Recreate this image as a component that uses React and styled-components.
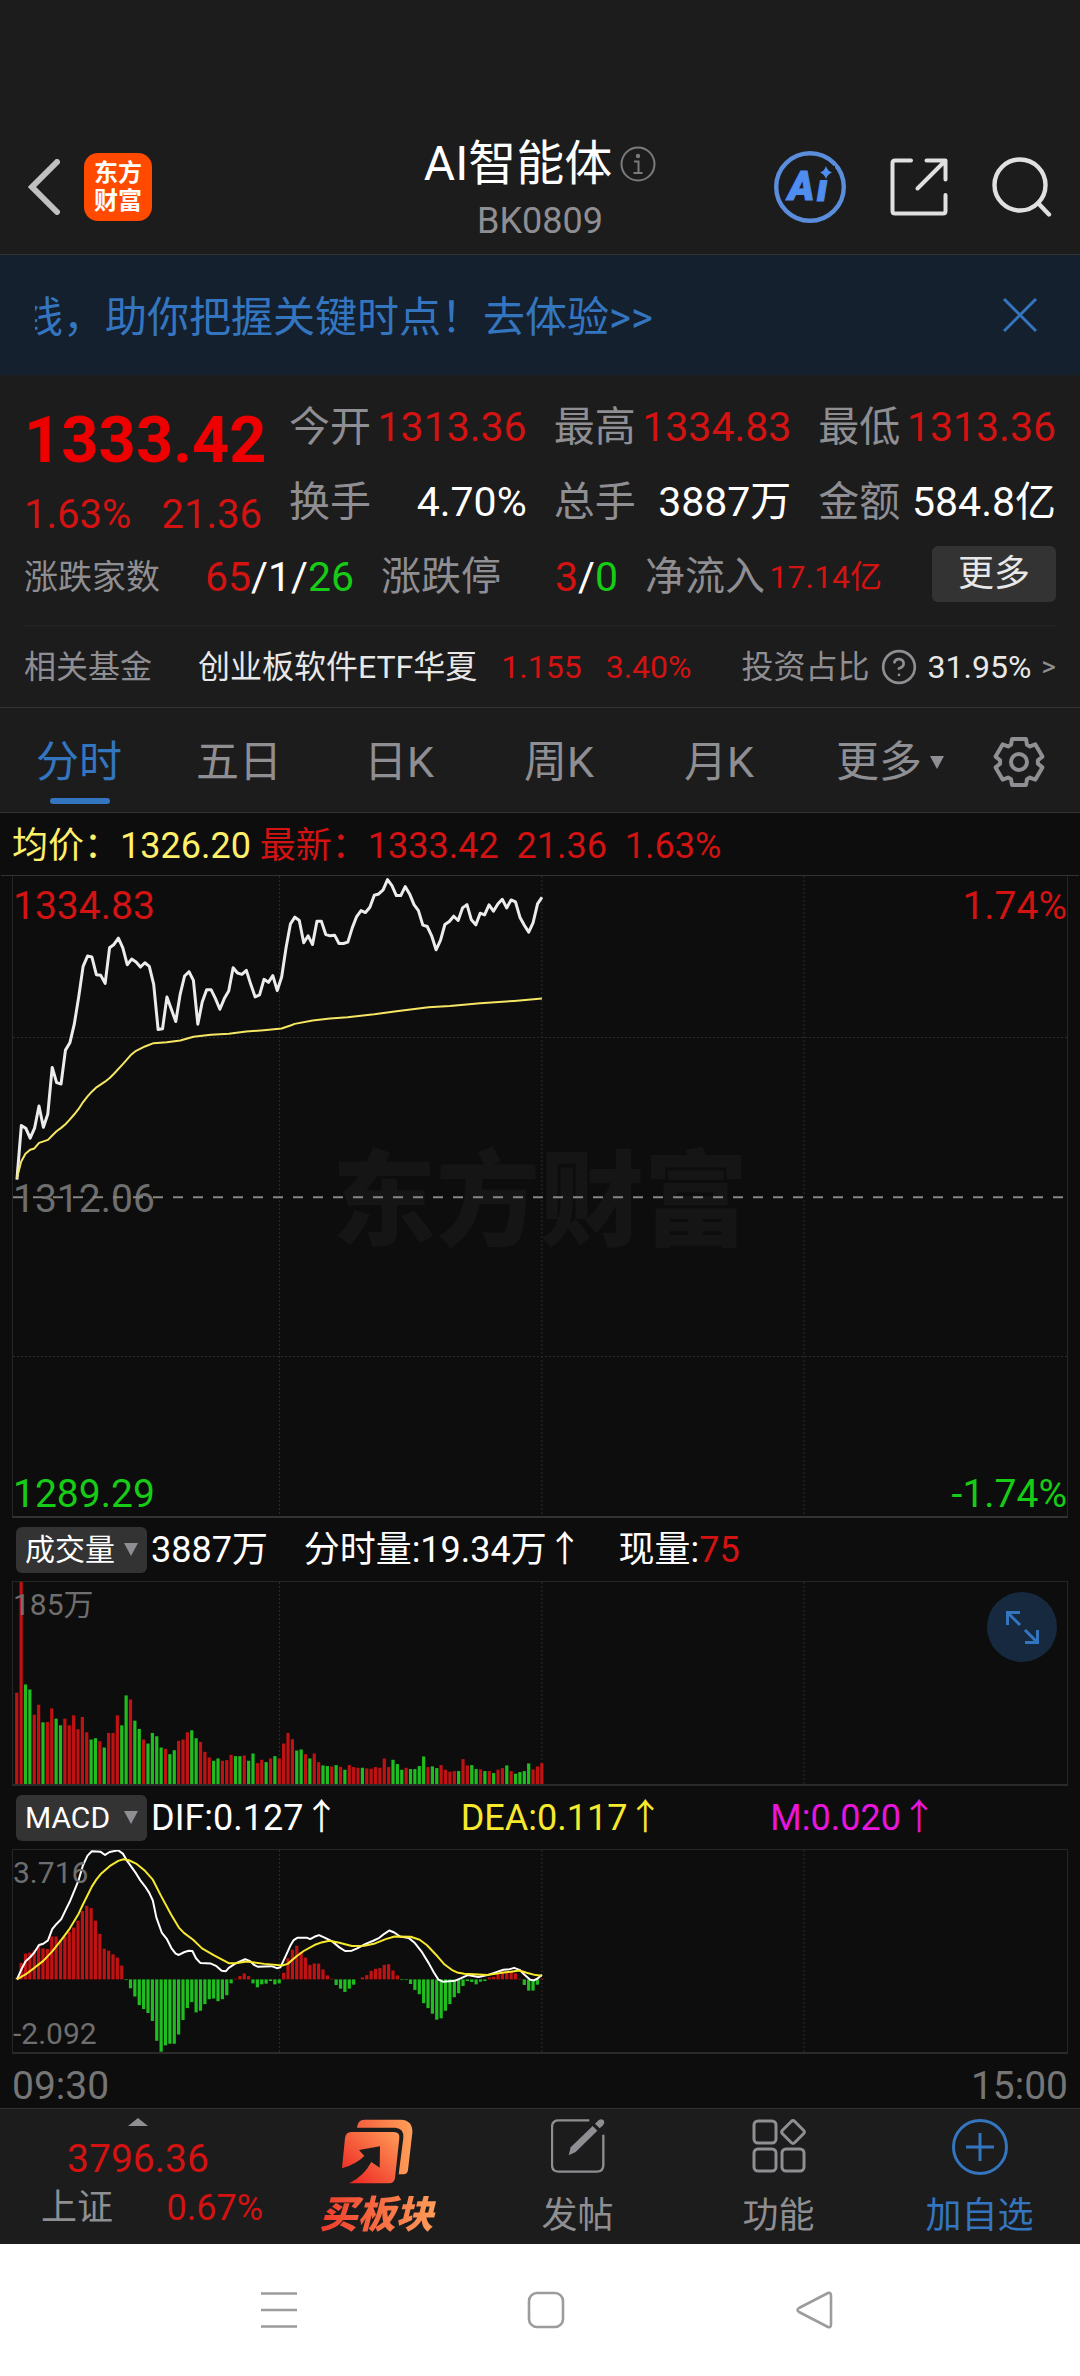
import React from 'react';
import styled, { createGlobalStyle, css } from 'styled-components';
import { CircleQuestionMark } from 'lucide-react';

const colors = {
  panel: '#1c1c1c',
  canvas: '#0d0d0d',
  line: '#333333',
  grid: '#262626',
  muted: '#8e8e93',
  dim: '#6e6e6e',
  white: '#ffffff',
  soft: '#e8e8e8',
  red: '#d31212',
  green: '#16cc16',
  blue: '#3475c0',
  yellow: '#fff069',
  dea: '#f7e92d',
  magenta: '#e815dc'
};

const GlobalStyle = createGlobalStyle`
  * {
    box-sizing: border-box;
  }

  body {
    margin: 0;
    background: #ffffff;
    font-family: Roboto, "Noto Sans CJK SC", sans-serif;
    color: ${colors.white};
  }

  button {
    margin: 0;
    padding: 0;
    border: 0;
    background: none;
    color: inherit;
    font: inherit;
    cursor: pointer;
  }

  svg {
    display: block;
  }
`;

/* ---------- header ---------- */

const Header = styled.header`
  display: grid;
  grid-template-columns: 1fr auto 1fr;
  align-items: center;
  height: 255px;
  padding: 120px 28px 0;
  background: ${colors.panel};
  border-bottom: 1px solid ${colors.line};
`;

const HeaderSide = styled.div`
  display: flex;
  align-items: center;
  justify-content: ${props => (props.$end ? 'flex-end' : 'flex-start')};
  gap: ${props => (props.$end ? '44px' : '24px')};
`;

const Logo = styled.button`
  width: 68px;
  height: 68px;
  border-radius: 14px;
  background: #ff4a00;
  font-size: 24px;
  font-weight: 700;
  line-height: 28px;
`;

const TitleBlock = styled.div`
  padding-top: 8px;
  text-align: center;
`;

const Title = styled.h1`
  display: flex;
  align-items: center;
  gap: 8px;
  margin: 0;
  font-size: 48px;
  font-weight: 400;
  line-height: 60px;
`;

const Code = styled.div`
  font-size: 36px;
  line-height: 54px;
  color: ${colors.muted};
`;

/* ---------- banner ---------- */

const Banner = styled.div`
  display: flex;
  align-items: center;
  justify-content: space-between;
  height: 120px;
  padding: 0 43px 0 35px;
  background: #14202e;
  color: ${colors.blue};
`;

const Marquee = styled.a`
  display: flex;
  justify-content: flex-end;
  width: 618px;
  padding-top: 6px;
  overflow: hidden;
  font-size: 42px;
  line-height: 60px;
  white-space: nowrap;
  color: inherit;
  text-decoration: none;
`;

/* ---------- quote ---------- */

const Quote = styled.section`
  padding: 22px 24px 0;
  background: ${colors.panel};
  border-bottom: 1px solid ${colors.line};
`;

const QuoteTop = styled.div`
  display: grid;
  grid-template-columns: 238px 1fr;
  column-gap: 27px;
`;

const LastPrice = styled.div`
  font-size: 65px;
  font-weight: 700;
  line-height: 86px;
  color: #ee0000;
`;

const Change = styled.div`
  display: flex;
  justify-content: space-between;
  font-size: 40px;
  line-height: 63px;
  color: ${colors.red};
`;

const StatGrid = styled.dl`
  display: grid;
  grid-template-columns: repeat(3, 1fr);
  grid-auto-rows: 60px;
  gap: 15px 27px;
  margin: 0;
`;

const Stat = styled.div`
  display: flex;
  align-items: center;
  justify-content: space-between;
  font-size: 41px;
  line-height: 60px;
  white-space: nowrap;

  dt {
    color: ${colors.muted};
  }

  dd {
    margin: 0;
    color: ${props => props.$color || colors.white};
  }
`;

const BreadthRow = styled.div`
  display: flex;
  align-items: center;
  gap: 27px;
  height: 56px;
`;

const Breadth = styled.div`
  display: flex;
  align-items: center;
  justify-content: space-between;
  width: ${props => (props.$wide ? '330px' : '237px')};
  padding-top: 5px;
  font-size: 41px;
  line-height: 56px;
  white-space: nowrap;
`;

const BreadthLabel = styled.span`
  font-size: ${props => (props.$small ? '34px' : '40px')};
  color: ${colors.muted};
`;

const Tint = styled.span`
  color: ${props => props.$color};
  font-size: ${props => (props.$small ? '32px' : 'inherit')};
`;

const MoreButton = styled.button`
  width: 124px;
  height: 56px;
  margin-left: auto;
  border-radius: 6px;
  background: #333333;
  font-size: 36px;
  line-height: 56px;
  color: ${colors.soft};
`;

const FundRow = styled.div`
  display: flex;
  align-items: center;
  height: 82px;
  margin-top: 23px;
  border-top: 2px solid #222222;
  font-size: 32px;
  line-height: 48px;
  white-space: nowrap;
  color: ${colors.muted};
`;

const FundName = styled.span`
  margin: 0 24px 0 46px;
  color: ${colors.soft};
`;

const FundChange = styled.span`
  margin-right: 24px;
  color: ${colors.red};
`;

const FundShare = styled.button`
  display: flex;
  align-items: center;
  gap: 10px;
  margin-left: auto;

  b {
    font-weight: 400;
    color: ${colors.soft};
  }

  i {
    font-style: normal;
    font-size: 28px;
  }
`;

/* ---------- tabs ---------- */

const Tabs = styled.nav`
  display: grid;
  grid-template-columns: repeat(6, 4fr) 3fr;
  height: 105px;
  background: ${colors.panel};
  border-bottom: 1px solid ${colors.line};
`;

const Tab = styled.button`
  display: flex;
  align-items: center;
  justify-content: center;
  position: relative;
  padding: 4px 2px 0 0;
  font-size: 43px;
  line-height: 60px;
  color: ${props => (props.$active ? colors.blue : colors.muted)};

  ${props => props.$active && css`
    &::after {
      content: '';
      position: absolute;
      bottom: 8px;
      left: 50%;
      width: 60px;
      height: 6px;
      margin-left: -30px;
      border-radius: 3px;
      background: ${colors.blue};
    }
  `}
`;

const Caret = styled.span`
  border: solid transparent;
  border-width: ${props => (props.$up ? '0 10px 8px' : '13px 7px 0')};
  border-top-color: ${props => (props.$up ? 'transparent' : colors.muted)};
  border-bottom-color: ${props => (props.$up ? colors.muted : 'transparent')};
`;

const TabCaret = styled(Caret)`
  position: absolute;
  right: 16px;
`;

/* ---------- charts ---------- */

const ChartArea = styled.main`
  background: ${colors.canvas};
`;

const Readout = styled.div`
  height: 62px;
  padding-left: 12px;
  font-size: 36px;
  line-height: 66px;
  white-space: pre;
  color: ${colors.red};
`;

const Panel = styled.div`
  position: relative;
  height: ${props => props.$height}px;
  margin: 0 12px;
  border: 1px solid ${colors.grid};
  border-bottom: 2px solid ${props => (props.$height > 300 ? colors.line : '#2a2a2a')};

  > svg {
    position: relative;
    width: 100%;
    height: 100%;
  }
`;

const PricePanel = styled(Panel)`
  &::before {
    content: '';
    position: absolute;
    top: -1px;
    left: -12px;
    right: -12px;
    border-top: 1px solid ${colors.line};
  }
`;

const AxisLabel = styled.span`
  position: absolute;
  z-index: ${props => (props.$small ? 1 : 0)};
  ${props => props.$edge === 'top' && css`top: ${props.$small ? 1 : 8}px;`}
  ${props => props.$edge === 'middle' && css`top: 50%; padding-top: 6px; transform: translateY(-50%);`}
  ${props => props.$edge === 'bottom' && css`bottom: ${props.$small ? -4 : 0}px;`}
  ${props => (props.$right ? 'right: 0;' : 'left: 0;')}
  font-size: ${props => (props.$small ? 30 : 39)}px;
  line-height: 44px;
  color: ${props => props.$color || colors.dim};
`;

const Watermark = styled.div`
  position: absolute;
  inset: 0;
  display: flex;
  align-items: center;
  justify-content: center;
  padding-top: 14px;
  font-size: 104px;
  font-weight: 900;
  line-height: 120px;
  color: #151515;
`;

const IndicatorRow = styled.div`
  display: flex;
  align-items: center;
  height: 63px;
  padding-left: 16px;
  font-size: 36px;
  line-height: 46px;
  white-space: pre;
`;

const IndicatorButton = styled.button`
  display: flex;
  align-items: center;
  justify-content: space-between;
  flex-shrink: 0;
  width: 131px;
  height: 46px;
  margin-right: 4px;
  padding: 0 9px;
  border-radius: 6px;
  background: #333333;
  font-size: 30px;
`;

const IndicatorValues = styled.div`
  display: grid;
  flex: 1;
  grid-template-columns: repeat(3, 1fr);
`;

const ExpandButton = styled.button`
  position: absolute;
  top: 10px;
  right: 10px;
  width: 70px;
  height: 70px;
  border-radius: 50%;
  background: #17293e;
`;

const TimeAxis = styled.div`
  display: flex;
  justify-content: space-between;
  height: 54px;
  padding: 0 12px;
  font-size: 39px;
  line-height: 64px;
  color: #757575;
`;

/* ---------- bottom bars ---------- */

const ActionBar = styled.footer`
  display: grid;
  grid-template-columns: 276px repeat(4, 1fr);
  height: 136px;
  background: ${colors.panel};
  border-top: 1px solid ${colors.line};
`;

const IndexButton = styled.button`
  display: flex;
  flex-direction: column;
  align-items: center;
  padding-top: 9px;
  font-size: 39px;
  line-height: 48px;
  color: ${colors.red};
`;

const IndexValue = styled.span`
  margin-top: 9px;
`;

const IndexDetail = styled.span`
  display: flex;
  justify-content: space-between;
  width: 250px;
  padding: 1px 0 0 28px;
  font-size: 36px;
  color: ${colors.red};

  em {
    font-style: normal;
    color: ${colors.muted};
  }
`;

const Action = styled.button`
  display: flex;
  flex-direction: column;
  align-items: center;
  justify-content: space-between;
  padding: 10px 0 2px;
  font-size: 36px;
  line-height: 52px;
  color: ${props => props.$color || colors.muted};
`;

const BuyLabel = styled.span`
  padding: 0 4px;
  font-size: 38px;
  font-style: italic;
  font-weight: 900;
  line-height: 54px;
  background: linear-gradient(90deg, #ee3529, #ff9f5a);
  background-clip: text;
  -webkit-background-clip: text;
  color: transparent;
`;

const SystemBar = styled.div`
  display: grid;
  grid-template-columns: repeat(3, 1fr);
  place-items: center;
  height: 132px;
  padding: 0 132px 0 145px;
  background: #ffffff;
`;

/* ---------- series ---------- */

// Distance below the top of the price panel, one value per minute from 09:30
const PRICE = [
  914, 751, 759, 789, 759, 692, 756, 716, 576, 622, 626, 524, 502, 446, 364,
  272, 241, 244, 297, 299, 323, 216, 206, 187, 216, 267, 250, 259, 274, 261,
  272, 326, 462, 460, 364, 401, 438, 356, 301, 288, 314, 446, 379, 342, 342,
  369, 401, 369, 346, 276, 292, 296, 284, 326, 364, 358, 311, 320, 300, 345,
  304, 216, 144, 124, 134, 201, 180, 206, 136, 136, 176, 180, 178, 203, 203,
  199, 156, 122, 104, 110, 94, 58, 54, 42, 11, 29, 59, 59, 32, 54, 86, 104,
  148, 152, 180, 222, 194, 146, 137, 121, 134, 96, 86, 132, 147, 112, 117, 87,
  106, 84, 70, 96, 72, 78, 124, 148, 169, 140, 84, 64
];

const AVERAGE = [
  [46, 909], [58, 859], [70, 836], [83, 824], [95, 820], [108, 803], [133, 794],
  [145, 781], [157, 768], [170, 758], [182, 747], [194, 733], [207, 717],
  [219, 701], [231, 681], [244, 663], [256, 649], [269, 636], [293, 619],
  [306, 608], [318, 595], [343, 566], [367, 537], [380, 526], [405, 513],
  [429, 503], [466, 500], [504, 495], [541, 484], [590, 478], [640, 475],
  [689, 468], [738, 464], [788, 459], [813, 450], [825, 445], [875, 435],
  [924, 429], [973, 425], [1048, 416], [1110, 407], [1200, 395], [1260, 391],
  [1345, 383], [1440, 376], [1518, 369]
];

// Traded volume per minute, negative where the minute closed lower
const VOLUME = [
  275, 609, -300, -285, 209, 239, -186, 187, 228, -197, -177, 197, 177, 207,
  165, 202, 156, -134, -138, 129, -110, 154, 154, 207, -177, -267, 255, -191,
  -166, 134, -122, -154, -144, -110, 106, -90, -102, 130, 134, 156, -162, -138,
  127, 97, 80, -70, -77, 70, 72, 88, -84, -84, 86, -70, -92, 63, 73, -66, 77,
  -84, 77, 122, 154, 135, -101, -104, 90, -77, 92, 66, -56, -54, 53, -57, 52,
  -43, 57, 51, 49, -49, 47, 46, 51, 49, 77, 51, -73, -60, -43, 49, -45, -45,
  -54, -83, 51, -53, -48, 57, 43, 37, 39, -39, 75, 56, -57, -45, 44, -39, 39,
  -33, 43, 48, -56, 39, -31, -36, -39, -62, 44, 53, 63
];

const MACD = [
  5, 50, 78, 81, 88, 105, 94, 92, 130, 130, 120, 130, 144, 157, 178, 207, 223,
  216, 178, 138, 93, 87, 76, 66, 42, -2, -27, -52, -78, -90, -102, -126, -186,
  -219, -200, -195, -195, -167, -123, -87, -69, -100, -95, -75, -60, -58, -66,
  -60, -48, -12, 2, 10, 18, 10, -12, -24, -15, -13, -5, -15, -12, 20, 64, 90,
  102, 83, 66, 44, 48, 48, 30, 12, 2, -17, -28, -38, -28, -16, 0, 6, 13, 26, 32,
  34, 44, 46, 27, 12, -2, -2, -14, -32, -45, -72, -87, -104, -122, -118, -95,
  -75, -54, -42, -20, -5, -8, -15, -7, -5, 6, 8, 20, 24, 25, 25, 18, 2, -17,
  -34, -34, -16, 2
];

const DIF = [
  [46, 392], [58, 363], [70, 338], [83, 325], [95, 310], [108, 288], [120, 284],
  [133, 274], [145, 240], [157, 224], [170, 210], [182, 183], [194, 157],
  [207, 123], [219, 91], [231, 47], [244, 17], [256, 4], [280, 5], [293, 15],
  [306, 6], [330, 1], [343, 11], [355, 33], [367, 51], [380, 71], [392, 92],
  [405, 110], [417, 130], [427, 153], [437, 205], [452, 250], [466, 269],
  [479, 297], [491, 314], [500, 318], [516, 309], [528, 305], [538, 306],
  [548, 328], [560, 342], [590, 344], [604, 351], [620, 366], [632, 367],
  [640, 357], [660, 343], [686, 331], [700, 337], [712, 349], [722, 354],
  [760, 352], [775, 358], [785, 355], [800, 320], [812, 291], [822, 273],
  [832, 266], [860, 266], [868, 270], [880, 263], [893, 258], [910, 266],
  [930, 277], [950, 295], [966, 306], [985, 305], [1000, 298], [1022, 285],
  [1045, 275], [1062, 266], [1076, 254], [1090, 244], [1104, 250], [1120, 262],
  [1145, 267], [1160, 280], [1180, 307], [1200, 342], [1215, 371], [1228, 393],
  [1240, 399], [1275, 396], [1290, 389], [1310, 379], [1340, 385], [1365, 379],
  [1390, 370], [1410, 363], [1428, 361], [1440, 357], [1455, 363], [1470, 379],
  [1485, 393], [1495, 395], [1505, 390], [1518, 378]
];

const DEA = [
  [46, 392], [70, 377], [95, 357], [120, 336], [145, 307], [170, 273],
  [194, 238], [219, 193], [231, 165], [244, 137], [256, 111], [269, 89],
  [281, 73], [306, 49], [330, 33], [345, 28], [360, 31], [380, 41], [405, 63],
  [427, 90], [450, 139], [479, 197], [500, 235], [515, 252], [540, 272],
  [565, 298], [600, 320], [640, 343], [660, 343], [690, 338], [740, 345],
  [790, 350], [805, 345], [830, 322], [850, 306], [880, 288], [900, 280],
  [922, 275], [950, 281], [985, 291], [1020, 290], [1050, 283], [1080, 270],
  [1105, 262], [1150, 263], [1175, 272], [1195, 288], [1225, 322], [1245, 347],
  [1265, 363], [1280, 371], [1300, 375], [1365, 379], [1400, 373], [1430, 369],
  [1455, 365], [1475, 372], [1500, 379], [1518, 381]
];

// Horizontal units shared by the three panels
const VIEW_LEFT = 35;
const VIEW_WIDTH = 2955;
const FIRST_X = 46;
const LAST_X = 1518;

const minuteX = (index, count) =>
  FIRST_X + (index * (LAST_X - FIRST_X)) / (count - 1);

const toPoints = pairs => pairs.map(pair => pair.join(',')).join(' ');

const Plot = ({ height, children }) => (
  <svg
    viewBox={`${VIEW_LEFT} 0 ${VIEW_WIDTH} ${height}`}
    preserveAspectRatio="none"
    aria-hidden="true"
  >
    {[782, 1518, 2253].map(x => (
      <line
        key={x}
        x1={x}
        x2={x}
        y1="0"
        y2={height}
        stroke="#2c2c2c"
        strokeDasharray="2 2"
        vectorEffect="non-scaling-stroke"
      />
    ))}
    {children}
  </svg>
);

const Curve = ({ points, color, width = 2 }) => (
  <polyline
    points={toPoints(points)}
    fill="none"
    stroke={color}
    strokeWidth={width}
    strokeLinejoin="round"
    vectorEffect="non-scaling-stroke"
  />
);

const Bars = ({ values, base, signed }) =>
  values.map((value, index) => (
    <rect
      key={index}
      x={minuteX(index, values.length) - 5}
      y={signed && value < 0 ? base : base - Math.abs(value)}
      width="9"
      height={Math.abs(value)}
      fill={value < 0 ? '#20bd20' : '#c01212'}
    />
  ));

/* ---------- icons ---------- */

const BackIcon = () => (
  <svg width="32" height="56" viewBox="0 0 32 56" fill="none" stroke="#c0c0c0" strokeWidth="6">
    <path d="M29 3 L4 28 L29 53" strokeLinecap="round" strokeLinejoin="miter" />
  </svg>
);

const InfoIcon = () => (
  <svg width="36" height="36" viewBox="0 0 36 36" fill="none" stroke="#7b7b7f" strokeWidth="2">
    <circle cx="18" cy="18" r="16.5" />
    <path d="M14 15.5h4.5V27M13.5 27h9" />
    <circle cx="18" cy="10" r="1.2" fill="#7b7b7f" />
  </svg>
);

const AiIcon = () => (
  <svg width="72" height="72" viewBox="0 0 72 72">
    <circle cx="36" cy="36" r="33.8" fill="none" stroke="#5a8ddb" strokeWidth="4.4" />
    <g
      fill="#4f8df0"
      stroke="#4f8df0"
      fontFamily="Roboto, sans-serif"
      fontSize="40"
      fontWeight="900"
      fontStyle="italic"
    >
      <text x="14" y="49">A</text>
      <text x="43" y="50">i</text>
    </g>
    <rect x="44" y="15" width="17" height="14" fill={colors.panel} />
    <path d="M52 15q1.500 5 6 6.500q-4.500 1.500-6 6.500q-1.500-5-6-6.500q4.500-1.500 6-6.500z" fill="#4f8df0" />
  </svg>
);

const ShareIcon = () => (
  <svg
    width="58"
    height="58"
    viewBox="0 0 58 58"
    fill="none"
    stroke="#e0e0e0"
    strokeWidth="4"
    strokeLinecap="round"
    strokeLinejoin="round"
  >
    <path d="M21 2.500H5q-2.500 0-2.500 2.500V53q0 2.500 2.500 2.500H53q2.500 0 2.500-2.500V37" />
    <path d="M36.500 2.500H55.500V21.500M55 3L27.500 30.500" />
  </svg>
);

const SearchIcon = () => (
  <svg width="60" height="60" viewBox="0 0 60 60" fill="none" stroke="#e0e0e0" strokeWidth="4.400">
    <circle cx="28" cy="28" r="25.500" />
    <path d="M46 46L57 57.500" strokeLinecap="round" />
  </svg>
);

const CloseIcon = () => (
  <svg width="34" height="34" viewBox="0 0 34 34" stroke={colors.blue} strokeWidth="3">
    <path d="M1 1L33 33M33 1L1 33" />
  </svg>
);

const gearPath = () => {
  const steps = [
    [-17, 24],
    [17, 24],
    [25, 19],
    [35, 19]
  ];
  const points = [];
  for (let tooth = 0; tooth < 6; tooth += 1) {
    steps.forEach(([offset, radius]) => {
      const angle = ((tooth * 60 + offset) * Math.PI) / 180;
      points.push(
        `${(26 + radius * Math.sin(angle)).toFixed(1)} ${(26 - radius * Math.cos(angle)).toFixed(1)}`
      );
    });
  }
  return `M${points.join('L')}Z`;
};

const GearIcon = () => (
  <svg width="52" height="52" viewBox="0 0 52 52" fill="none" stroke={colors.muted} strokeWidth="4">
    <path d={gearPath()} strokeLinejoin="round" />
    <circle cx="26" cy="26" r="8" />
  </svg>
);

const ExpandIcon = () => (
  <svg width="70" height="70" viewBox="0 0 70 70" fill="none" stroke={colors.blue} strokeWidth="3">
    <path d="M20.500 33V20.500H33M21 21L33 33" />
    <path d="M50.500 38V50.500H38M50 50L38 38" />
  </svg>
);

const BuyIcon = () => (
  <svg width="72" height="65" viewBox="122 61 216 195">
    <defs>
      <linearGradient id="buy" x1="0" y1="1" x2="1" y2="0">
        <stop offset="0.1" stopColor="#ee2a25" />
        <stop offset="1" stopColor="#ff9d58" />
      </linearGradient>
      <linearGradient id="buyBack" x1="0" y1="0" x2="1" y2="0">
        <stop offset="0" stopColor="#f4603f" />
        <stop offset="1" stopColor="#ff9f58" />
      </linearGradient>
    </defs>
    <path
      d="M170 87Q172 63 192 63H302Q338 65 336 102L323 214Q321 227 309 227H295L309 117Q311 89 285 87Z"
      fill="url(#buyBack)"
    />
    <path
      d="M153 100H280Q299 100 297 118L284 238Q282 254 266 254H147Q190 233 213 190L238 207L239 143L176 154L192 172Q167 197 125 209L134 118Q136 100 153 100Z"
      fill="url(#buy)"
    />
  </svg>
);

const PostIcon = () => (
  <svg width="54" height="54" viewBox="751 63 162 162">
    <path
      d="M866 67H774Q754 67 754 87V201Q754 221 774 221H888Q908 221 908 201V110"
      fill="none"
      stroke={colors.muted}
      strokeWidth="7"
    />
    <path d="M804 172L810 148L876 84L890 98L825 162Z" fill={colors.muted} />
    <path d="M883 77L894 67Q902 61 908 67Q914 74 907 82L897 91Z" fill={colors.muted} />
  </svg>
);

const FunctionsIcon = () => (
  <svg width="54" height="54" viewBox="0 0 54 54" fill="none" stroke={colors.muted} strokeWidth="3">
    <rect x="2" y="2" width="22" height="22" rx="4" />
    <rect x="2" y="30" width="22" height="22" rx="4" />
    <rect x="30" y="30" width="22" height="22" rx="4" />
    <path d="M39.200 2.500Q41 0.800 42.800 2.500L51.500 11.200Q53.200 13 51.500 14.800L42.800 23.500Q41 25.200 39.200 23.500L30.500 14.800Q28.800 13 30.500 11.200Z" />
  </svg>
);

const AddIcon = () => (
  <svg width="56" height="56" viewBox="0 0 56 56" fill="none" stroke={colors.blue} strokeWidth="3">
    <circle cx="28" cy="28" r="26.500" />
    <path d="M28 14V42M14 28H42" />
  </svg>
);

const SystemIcon = ({ children }) => (
  <svg
    width="40"
    height="40"
    viewBox="0 0 40 40"
    fill="none"
    stroke="#9c9c9c"
    strokeWidth="2.600"
    strokeLinejoin="round"
  >
    {children}
  </svg>
);

/* ---------- page ---------- */

const STATS = [
  { label: '今开', value: '1313.36', color: colors.red },
  { label: '最高', value: '1334.83', color: colors.red },
  { label: '最低', value: '1313.36', color: colors.red },
  { label: '换手', value: '4.70%' },
  { label: '总手', value: '3887万' },
  { label: '金额', value: '584.8亿' }
];

const TABS = ['分时', '五日', '日K', '周K', '月K'];

const App = () => (
  <>
    <GlobalStyle />

    <Header>
      <HeaderSide>
        <button aria-label="返回"><BackIcon /></button>
        <Logo>东方<br />财富</Logo>
      </HeaderSide>
      <TitleBlock>
        <Title>AI智能体<InfoIcon /></Title>
        <Code>BK0809</Code>
      </TitleBlock>
      <HeaderSide $end>
        <button aria-label="AI"><AiIcon /></button>
        <button aria-label="分享"><ShareIcon /></button>
        <button aria-label="搜索"><SearchIcon /></button>
      </HeaderSide>
    </Header>

    <Banner>
      <Marquee href="#try"><span>线，助你把握关键时点！去体验&gt;&gt;</span></Marquee>
      <button aria-label="关闭"><CloseIcon /></button>
    </Banner>

    <Quote>
      <QuoteTop>
        <div>
          <LastPrice>1333.42</LastPrice>
          <Change><span>1.63%</span><span>21.36</span></Change>
        </div>
        <StatGrid>
          {STATS.map(stat => (
            <Stat key={stat.label} $color={stat.color}>
              <dt>{stat.label}</dt>
              <dd>{stat.value}</dd>
            </Stat>
          ))}
        </StatGrid>
      </QuoteTop>

      <BreadthRow>
        <Breadth $wide>
          <BreadthLabel $small>涨跌家数</BreadthLabel>
          <span>
            <Tint $color={colors.red}>65</Tint>/1/<Tint $color={colors.green}>26</Tint>
          </span>
        </Breadth>
        <Breadth>
          <BreadthLabel>涨跌停</BreadthLabel>
          <span>
            <Tint $color={colors.red}>3</Tint>/<Tint $color={colors.green}>0</Tint>
          </span>
        </Breadth>
        <Breadth>
          <BreadthLabel>净流入</BreadthLabel>
          <Tint $color={colors.red} $small>17.14亿</Tint>
        </Breadth>
        <MoreButton>更多</MoreButton>
      </BreadthRow>

      <FundRow>
        <span>相关基金</span>
        <FundName>创业板软件ETF华夏</FundName>
        <FundChange>1.155</FundChange>
        <FundChange>3.40%</FundChange>
        <FundShare>
          投资占比
          <CircleQuestionMark size={38} strokeWidth={1.7} />
          <b>31.95%</b>
          <i>&gt;</i>
        </FundShare>
      </FundRow>
    </Quote>

    <Tabs>
      {TABS.map((tab, index) => (
        <Tab key={tab} $active={index === 0}>{tab}</Tab>
      ))}
      <Tab>更多<TabCaret /></Tab>
      <Tab aria-label="设置"><GearIcon /></Tab>
    </Tabs>

    <ChartArea>
      <Readout>
        <Tint $color={colors.yellow}>均价：1326.20</Tint> 最新：1333.42  21.36  1.63%
      </Readout>

      <PricePanel $height={643}>
        <Watermark>东方财富</Watermark>
        <AxisLabel $edge="top" $color={colors.red}>1334.83</AxisLabel>
        <AxisLabel $edge="top" $color={colors.red} $right>1.74%</AxisLabel>
        <AxisLabel $edge="middle">1312.06</AxisLabel>
        <AxisLabel $edge="bottom" $color={colors.green}>1289.29</AxisLabel>
        <AxisLabel $edge="bottom" $color={colors.green} $right>-1.74%</AxisLabel>
        <Plot height={1926}>
          {[486, 1446].map(y => (
            <line
              key={y}
              x1={VIEW_LEFT}
              x2={VIEW_LEFT + VIEW_WIDTH}
              y1={y}
              y2={y}
              stroke="#2c2c2c"
              strokeDasharray="2 2"
              vectorEffect="non-scaling-stroke"
            />
          ))}
          <line
            x1={VIEW_LEFT}
            x2={VIEW_LEFT + VIEW_WIDTH}
            y1="967"
            y2="967"
            stroke="#868686"
            strokeWidth="2"
            strokeDasharray="10 10"
            vectorEffect="non-scaling-stroke"
          />
          <Curve
            points={PRICE.map((y, index) => [minuteX(index, PRICE.length), y])}
            color="#ececec"
            width={3}
          />
          <Curve points={AVERAGE} color="#f5e663" />
        </Plot>
      </PricePanel>

      <IndicatorRow>
        <IndicatorButton>成交量<Caret /></IndicatorButton>
        <span>3887万    分时量:19.34万↑    现量:<Tint $color={colors.red}>75</Tint></span>
      </IndicatorRow>
      <Panel $height={205}>
        <AxisLabel $edge="top" $small>185万</AxisLabel>
        <Plot height={609}>
          <Bars values={VOLUME} base={609} />
        </Plot>
        <ExpandButton aria-label="全屏"><ExpandIcon /></ExpandButton>
      </Panel>

      <IndicatorRow>
        <IndicatorButton>MACD<Caret /></IndicatorButton>
        <IndicatorValues>
          <span>DIF:0.127↑</span>
          <Tint $color={colors.dea}>DEA:0.117↑</Tint>
          <Tint $color={colors.magenta}>M:0.020↑</Tint>
        </IndicatorValues>
      </IndicatorRow>
      <Panel $height={205}>
        <AxisLabel $edge="top" $small>3.716</AxisLabel>
        <AxisLabel $edge="bottom" $small>-2.092</AxisLabel>
        <Plot height={612}>
          <Bars values={MACD} base={392} signed />
          <Curve points={DIF} color="#ffffff" />
          <Curve points={DEA} color={colors.dea} />
        </Plot>
      </Panel>

      <TimeAxis>
        <span>09:30</span>
        <span>15:00</span>
      </TimeAxis>
    </ChartArea>

    <ActionBar>
      <IndexButton>
        <Caret $up />
        <IndexValue>3796.36</IndexValue>
        <IndexDetail><em>上证</em>0.67%</IndexDetail>
      </IndexButton>
      <Action>
        <BuyIcon />
        <BuyLabel>买板块</BuyLabel>
      </Action>
      <Action>
        <PostIcon />
        发帖
      </Action>
      <Action>
        <FunctionsIcon />
        功能
      </Action>
      <Action $color={colors.blue}>
        <AddIcon />
        加自选
      </Action>
    </ActionBar>

    <SystemBar>
      <button aria-label="最近任务">
        <SystemIcon><path d="M2 3.500H38M2 20H38M2 36.500H38" /></SystemIcon>
      </button>
      <button aria-label="主屏幕">
        <SystemIcon><rect x="3" y="3" width="34" height="34" rx="8" /></SystemIcon>
      </button>
      <button aria-label="返回上一页">
        <SystemIcon><path d="M34 3Q37 2 37 6V34Q37 38 34 37L5 22Q2 20 5 18Z" /></SystemIcon>
      </button>
    </SystemBar>
  </>
);

export default App;
